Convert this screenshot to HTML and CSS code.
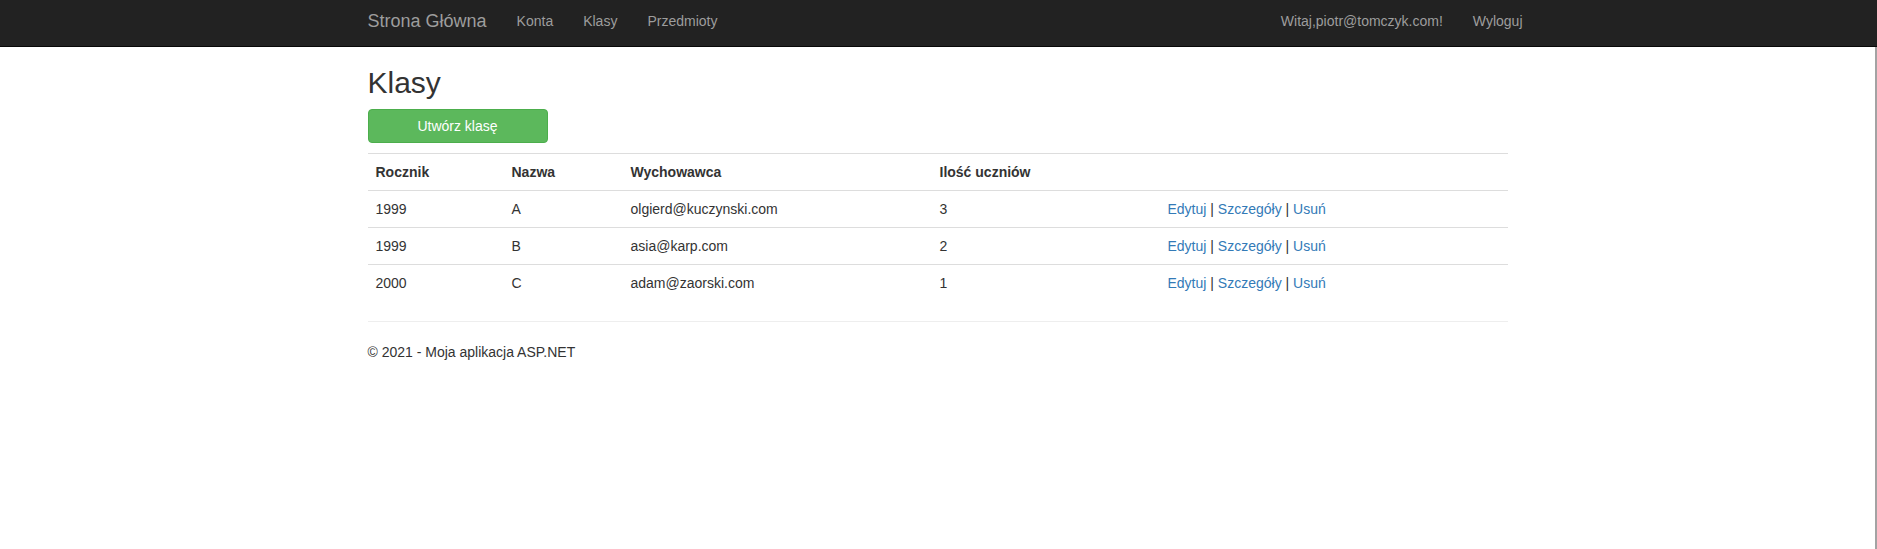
FILE: index.html
```html
<!DOCTYPE html>
<html lang="pl">
<head>
<meta charset="utf-8">
<title>Klasy</title>
<link rel="stylesheet" href="styles.css">
</head>
<body>
<header class="navbar">
  <div class="container navbar-inner">
    <a class="brand" href="#">Strona Główna</a>
    <nav class="nav">
      <a href="#">Konta</a>
      <a href="#">Klasy</a>
      <a href="#">Przedmioty</a>
    </nav>
    <nav class="nav nav-right">
      <a href="#">Witaj,piotr@tomczyk.com!</a>
      <a href="#">Wyloguj</a>
    </nav>
  </div>
</header>
<main class="container body-content">
  <h2 class="title">Klasy</h2>
  <div class="actions">
    <a class="btn-success" href="#">Utwórz klasę</a>
  </div>
  <table class="table">
    <colgroup>
      <col class="c1"><col class="c2"><col class="c3"><col class="c4"><col class="c5">
    </colgroup>
    <tr>
      <th>Rocznik</th>
      <th>Nazwa</th>
      <th>Wychowawca</th>
      <th>Ilość uczniów</th>
      <th></th>
    </tr>
    <tr>
      <td>1999</td>
      <td>A</td>
      <td>olgierd@kuczynski.com</td>
      <td>3</td>
      <td><a href="#">Edytuj</a> | <a href="#">Szczegóły</a> | <a href="#">Usuń</a></td>
    </tr>
    <tr>
      <td>1999</td>
      <td>B</td>
      <td>asia@karp.com</td>
      <td>2</td>
      <td><a href="#">Edytuj</a> | <a href="#">Szczegóły</a> | <a href="#">Usuń</a></td>
    </tr>
    <tr>
      <td>2000</td>
      <td>C</td>
      <td>adam@zaorski.com</td>
      <td>1</td>
      <td><a href="#">Edytuj</a> | <a href="#">Szczegóły</a> | <a href="#">Usuń</a></td>
    </tr>
  </table>
  <hr class="sep">
  <footer class="footer">
    <p>© 2021 - Moja aplikacja ASP.NET</p>
  </footer>
</main>
<div class="scroll-edge"></div>
</body>
</html>
```

FILE: styles.css
```css
html, body {
  margin: 0;
  padding: 0;
  background: #fff;
}
body {
  font-family: "Liberation Sans", Arial, Helvetica, sans-serif;
  font-size: 14px;
  line-height: 20px;
  color: #333;
  padding-right: 2px;
}
a {
  color: #337ab7;
  text-decoration: none;
}
.container {
  width: 1170px;
  box-sizing: border-box;
  padding: 0 15px;
  margin: 0 auto;
}
.navbar {
  background: #222;
  border-bottom: 1px solid #080808;
  height: 46px;
  margin-right: -2px;
  padding-right: 2px;
}
.navbar-inner {
  display: flex;
  align-items: flex-start;
  padding-top: 11px;
}
.brand {
  font-size: 18px;
  line-height: 20px;
  color: #9d9d9d;
  padding-right: 15px;
}
.nav {
  display: flex;
}
.nav a {
  color: #9d9d9d;
  padding: 0 15px;
  line-height: 20px;
}
.nav-right {
  margin-left: auto;
  margin-right: -30px;
}
.title {
  font-size: 30px;
  font-weight: 500;
  line-height: 33px;
  margin: 19px 0 10px;
  color: #333;
}
.actions {
  display: flex;
  margin-bottom: 10px;
}
.btn-success {
  display: block;
  box-sizing: border-box;
  width: 180px;
  height: 34px;
  padding: 6px 12px;
  text-align: center;
  color: #fff;
  background: #5cb85c;
  border: 1px solid #4cae4c;
  border-radius: 4px;
  line-height: 20px;
}
.table {
  width: 100%;
  border-collapse: collapse;
  border-spacing: 0;
  table-layout: fixed;
  margin-bottom: 20px;
}
.c1 { width: 136px; }
.c2 { width: 119px; }
.c3 { width: 309px; }
.c4 { width: 228px; }
.c5 { width: 348px; }
.table th,
.table td {
  padding: 8px;
  line-height: 20px;
  border-top: 1px solid #ddd;
  text-align: left;
  vertical-align: top;
}
.table th {
  font-weight: bold;
}
.sep {
  margin: 20px 0;
  border: 0;
  border-top: 1px solid #eee;
  height: 0;
}
.footer p {
  margin: 0 0 10px;
}
.scroll-edge {
  position: fixed;
  top: 47px;
  right: 0;
  bottom: 0;
  width: 2px;
  background: #a3a3a3;
}
```
